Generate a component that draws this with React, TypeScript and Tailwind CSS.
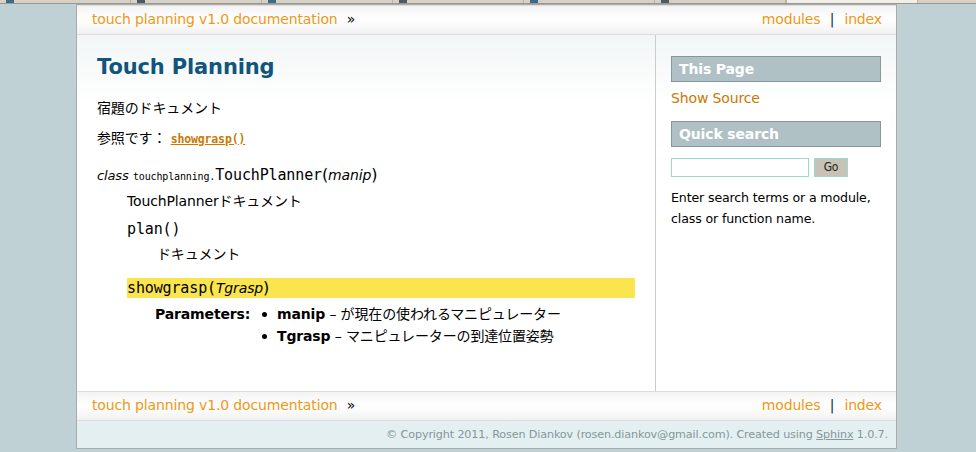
import React from 'react';

const SANS = "font-['DejaVu_Sans','Noto_Sans_CJK_JP',sans-serif]";
const MONO = "font-['DejaVu_Sans_Mono',monospace]";

// Remnant of the browser tab strip along the top edge
const TabStrip: React.FC = () => {
  const tabs = [0, 130, 262, 393, 526, 658];
  return (
    <div className="flex h-[4px] w-full bg-[#d6d1c6] border-b border-[#9c978d]">
      {tabs.map((x, i) => (
        <div key={x} className="flex h-full w-[131px] border-r border-[#b8b2a6]">
          <div className={`ml-[6px] h-[3px] w-[8px] ${i % 2 ? 'bg-[#4c5a66]' : 'bg-[#3d6a86]'}`} />
        </div>
      ))}
      <div className="h-full w-[132px] bg-[#f1efea] border-x border-[#b8b2a6]" />
    </div>
  );
};

const RelatedBar: React.FC = () => (
  <div className="flex h-[30px] items-start border-y border-[#dddddd] bg-[linear-gradient(to_bottom,#f3f3f3,#ffffff_45%,#fafafa_70%,#f1f1f1)] pl-[10px] pr-[4px] leading-[26px]">
    <div className="flex-1">
      <a className="px-[5px] text-[#ee9816]">touch planning v1.0 documentation</a> »
    </div>
    <div className="mr-[5px]">
      <a className="px-[5px] text-[#ee9816]">modules</a> <span className="text-[#1c2a48]">|</span>
    </div>
    <div className="mr-[5px]">
      <a className="px-[5px] text-[#ee9816]">index</a>
    </div>
  </div>
);

const Param: React.FC<{ name: string; desc: string }> = ({ name, desc }) => (
  <div className="flex items-center leading-[22px]">
    <div className="h-[5px] w-[5px] rounded-full bg-black" />
    <span className="ml-[10px]">
      <strong>{name}</strong> – {desc}
    </span>
  </div>
);

const Body: React.FC = () => (
  <main className="flex-1 border-r border-[#cccccc] px-[20px] pt-[7px]">
    <h1 className="pt-[15px] pb-[6px] text-[21px] font-bold leading-[21px] text-[#11557c]">Touch Planning</h1>
    <p className="mt-[14px]">宿題のドキュメント</p>
    <p className="mt-[9px]">
      参照です：{' '}
      <a className={`${MONO} text-[11.5px] font-bold text-[#ca7900] underline`}>showgrasp()</a>
    </p>

    <dl className="mt-[14px]">
      <dt className="whitespace-nowrap">
        <em className="text-[13px]">class</em>{' '}
        <span className={`${MONO} text-[10px]`}>touchplanning.</span>
        <span className={`${MONO} text-[15px]`}>TouchPlanner</span>
        <span className="text-[16px]">(</span>
        <em>manip</em>
        <span className="text-[16px]">)</span>
      </dt>
      <dd className="ml-[30px]">
        <p className="mt-[4px]">TouchPlannerドキュメント</p>

        <dl className="mt-[7px]">
          <dt className={`${MONO} text-[15px]`}>plan()</dt>
          <dd className="ml-[30px] mt-[4px]">ドキュメント</dd>
        </dl>

        <dl className="mt-[13px]">
          <dt className="bg-[#fbe54e] leading-[20px]">
            <span className={`${MONO} text-[15px]`}>showgrasp(</span>
            <em>Tgrasp</em>
            <span className="text-[16px]">)</span>
          </dt>
          <dd className="ml-[28px] mt-[5px] flex">
            <div className="w-[107px] font-bold leading-[22px]">Parameters:</div>
            <div>
              <Param name="manip" desc="が現在の使われるマニピュレーター" />
              <Param name="Tgrasp" desc="マニピュレーターの到達位置姿勢" />
            </div>
          </dd>
        </dl>
      </dd>
    </dl>
  </main>
);

const Sidebar: React.FC = () => (
  <aside className="w-[240px] px-[15px] pt-[21px]">
    <h3 className="border border-[#86989b] bg-[#afc1c4] py-[1.5px] pl-[7px] font-bold text-white">This Page</h3>
    <a className="mt-[6px] block text-[#ca7900]">Show Source</a>
    <h3 className="mt-[12px] border border-[#86989b] bg-[#afc1c4] py-[1.5px] pl-[7px] font-bold text-white">Quick search</h3>
    <div className="mt-[11px] flex">
      <div className="h-[19px] w-[138px] border border-[#98dbcc] bg-white" />
      <button className="ml-[5px] flex h-[19px] w-[34px] items-center justify-center border border-[#98dbcc] bg-[#c7c1b6] font-['DejaVu_Sans_Condensed','Liberation_Sans',sans-serif] text-[12px] text-[#222]">
        Go
      </button>
    </div>
    <p className="mt-[10px] w-[210px] text-[12.6px]">Enter search terms or a module, class or function name.</p>
  </aside>
);

const App: React.FC = () => (
  <div className={`min-h-screen bg-[#bfd1d4] ${SANS} text-[14px] leading-[21px] tracking-[-0.01em] text-black`}>
    <TabStrip />
    <div className="ml-[76px] w-[821px] border border-[#aaaaaa]">
      <RelatedBar />
      <div className="flex h-[356px] bg-[linear-gradient(to_bottom,#f2f6f6_0px,#ffffff_70px)]">
        <Body />
        <Sidebar />
      </div>
      <RelatedBar />
      <footer className="bg-[#e3eff1] py-[3px] pr-[8px] text-right text-[11.2px] text-[#86989b]">
        © Copyright 2011, Rosen Diankov (rosen.diankov@gmail.com). Created using <a className="underline">Sphinx</a> 1.0.7.
      </footer>
    </div>
  </div>
);

export default App;
